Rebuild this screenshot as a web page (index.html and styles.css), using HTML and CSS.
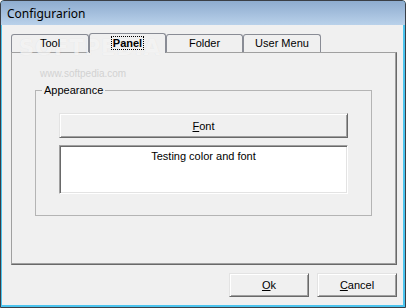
FILE: index.html
```html
<!DOCTYPE html>
<html>
<head>
<meta charset="utf-8">
<link rel="stylesheet" href="styles.css">
</head>
<body>
<div class="window">
  <div class="titlebar"><span class="title">Configurarion</span></div>
  <div class="client">
    <div class="tabs">
      <div class="tab w78">Tool</div>
      <div class="tab sel"><span class="focus">Panel</span></div>
      <div class="tab">Folder</div>
      <div class="tab w78">User Menu</div>
    </div>
    <div class="panel">
      <div class="group">
        <span class="legend">Appearance</span>
        <button class="btn wide"><u>F</u>ont</button>
        <div class="preview">Testing color and font</div>
      </div>
    </div>
    <div class="actions">
      <button class="btn"><u>O</u>k</button>
      <button class="btn"><u>C</u>ancel</button>
    </div>
    <div class="wm">SOFTPEDIA</div>
    <div class="wm2">www.softpedia.com</div>
  </div>
</div>
</body>
</html>
```

FILE: styles.css
```css
html, body {
  margin: 0;
  padding: 0;
}
body {
  width: 406px;
  height: 308px;
  overflow: hidden;
  font-family: "Liberation Sans", Arial, sans-serif;
  font-size: 11px;
  color: #000;
  background: #fff;
}
.window {
  box-sizing: border-box;
  width: 406px;
  height: 308px;
  display: flex;
  flex-direction: column;
  border: 1px solid #3a3f46;
  border-radius: 4px 4px 0 0;
  background: #4cc4ee;
  padding: 0 2px 2px 1px;
}
.titlebar {
  height: 24px;
  margin: 0 -2px 0 -1px;
  border-radius: 3px 3px 0 0;
  background: linear-gradient(#8eaccf, #b9d1ea);
  display: flex;
  align-items: center;
  padding-left: 6px;
}
.title {
  font-family: "Noto Sans", "Open Sans", sans-serif;
  font-size: 12px;
  line-height: 14px;
  margin-top: 1px;
}
.client {
  position: relative;
  flex: 1;
  background: #f0f0f0;
  padding: 8px 6px 8px 9px;
  display: flex;
  flex-direction: column;
}
.tabs {
  height: 19px;
  display: flex;
  align-items: flex-end;
  position: relative;
  z-index: 2;
}
.tab {
  position: relative;
  box-sizing: border-box;
  width: 77px;
  height: 18px;
  border: 1px solid #898c95;
  border-bottom: none;
  border-radius: 3px 3px 0 0;
  background: transparent;
  text-align: center;
  line-height: 16px;
}
.tab.w78 {
  width: 78px;
}
.tab.sel {
  height: 20px;
  margin-bottom: -1px;
  font-weight: bold;
  line-height: 15px;
  padding-top: 2px;
}
.tab.sel::after {
  content: "";
  position: absolute;
  left: 0;
  right: 0;
  bottom: 0;
  height: 1px;
  background: #f0f0f0;
}
.focus {
  outline: 1px dotted #000;
  outline-offset: 0;
  padding: 0 1px;
}
.panel {
  box-sizing: border-box;
  height: 213px;
  border: 1px solid #a0a0a0;
  border-right-color: #696969;
  border-bottom-color: #696969;
  box-shadow: inset -1px -1px 0 #a0a0a0;
  padding: 37px 0 0 23px;
}
.group {
  position: relative;
  box-sizing: border-box;
  width: 337px;
  height: 126px;
  border: 1px solid #b4b4b4;
  padding: 22px 23px 0 23px;
}
.legend {
  position: absolute;
  left: 6px;
  top: -9px;
  padding: 0 2px;
  background: #f0f0f0;
  line-height: 16px;
}
.btn {
  box-sizing: border-box;
  width: 80px;
  height: 25px;
  padding: 0;
  margin: 0;
  font: inherit;
  color: #000;
  background: #f0f0f0;
  border: 1px solid;
  border-color: #e3e3e3 #696969 #696969 #e3e3e3;
  box-shadow: inset 1px 1px 0 #fff, inset -1px -1px 0 #a0a0a0;
}
.btn.wide {
  display: block;
  width: 289px;
}
.preview {
  box-sizing: border-box;
  height: 49px;
  margin-top: 7px;
  background: #fff;
  border: 1px solid;
  border-color: #a0a0a0 #fff #fff #a0a0a0;
  box-shadow: inset 1px 1px 0 #696969, inset -1px -1px 0 #e3e3e3;
  text-align: center;
  padding-top: 3px;
  line-height: 14px;
}
.actions {
  display: flex;
  justify-content: flex-end;
  gap: 8px;
  margin-top: 8px;
}
.actions .btn {
  height: 24px;
}
.wm {
  position: absolute;
  left: 17px;
  top: 11px;
  font-family: "DejaVu Sans", sans-serif;
  font-weight: bold;
  font-size: 21px;
  letter-spacing: 1px;
  color: rgba(255, 255, 255, 0.6);
  text-shadow: 0 0 1px rgba(190, 190, 190, 0.3);
  z-index: 1;
  pointer-events: none;
}
.wm2 {
  position: absolute;
  left: 38px;
  top: 43px;
  font-family: "Liberation Sans", sans-serif;
  font-size: 10px;
  color: #d2d2d2;
  z-index: 1;
}
```
